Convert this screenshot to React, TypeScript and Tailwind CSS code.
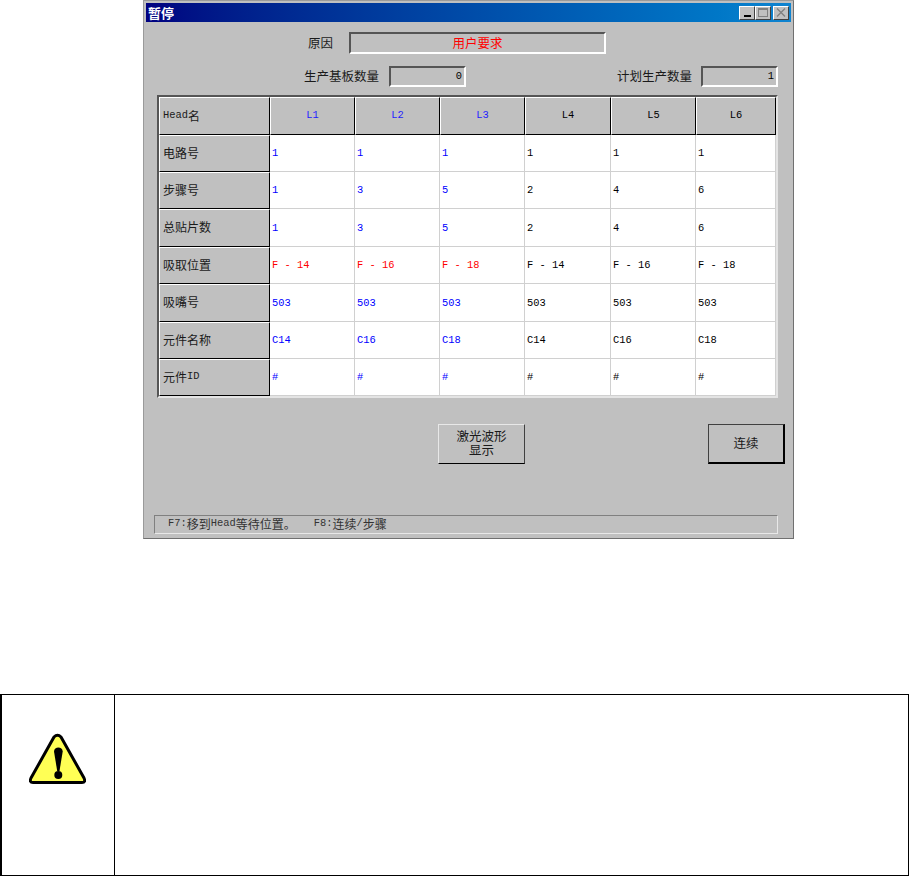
import React from 'react';

const cjk = "font-['Noto_Sans_CJK_SC','Liberation_Sans',sans-serif]";
const mono = "font-['Liberation_Mono','Noto_Sans_CJK_SC',monospace]";

const columns = [
  { name: 'L1', color: 'text-[#0000ff]', cells: ['1', '1', '1', 'F - 14', '503', 'C14', '#'] },
  { name: 'L2', color: 'text-[#0000ff]', cells: ['1', '3', '3', 'F - 16', '503', 'C16', '#'] },
  { name: 'L3', color: 'text-[#0000ff]', cells: ['1', '5', '5', 'F - 18', '503', 'C18', '#'] },
  { name: 'L4', color: 'text-black', cells: ['1', '2', '2', 'F - 14', '503', 'C14', '#'] },
  { name: 'L5', color: 'text-black', cells: ['1', '4', '4', 'F - 16', '503', 'C16', '#'] },
  { name: 'L6', color: 'text-black', cells: ['1', '6', '6', 'F - 18', '503', 'C18', '#'] },
];

const rowLabels = ['电路号', '步骤号', '总贴片数', '吸取位置', '吸嘴号', '元件名称', '元件ID'];

const Field = ({ className, text }: { className: string; text: string }) => (
  <div className={`flex items-center border-2 border-t-[#555555] border-l-[#555555] border-b-white border-r-white ${className}`}>
    {text}
  </div>
);

const TitleButton = ({ children, className = '' }: { children: React.ReactNode; className?: string }) => (
  <div className={`flex h-[14px] w-[16px] items-center justify-center border border-t-white border-l-white border-b-[#404040] border-r-[#404040] bg-[#c0c0c0] ${className}`}>
    {children}
  </div>
);

const App = () => {
  return (
    <div className="h-[876px] w-[909px] overflow-hidden bg-white">
      {/* dialog */}
      <div className="ml-[143px] h-[539px] w-[651px] border border-[#9a9a9a] border-r-[#707070] border-b-[#707070] bg-[#c0c0c0] p-[2px]">
        <div className="flex h-[19px] items-center justify-between bg-gradient-to-r from-[#000080] to-[#1084d0] pl-[2px] pr-[2px]">
          <span className={`${cjk} text-[13px] font-bold leading-none text-white`}>暂停</span>
          <div className="flex items-center">
            <TitleButton>
              <div className="mt-[7px] h-[2px] w-[7px] bg-black" />
            </TitleButton>
            <TitleButton>
              <div className="h-[9px] w-[10px] border border-t-2 border-[#808080]" />
            </TitleButton>
            <TitleButton className="ml-[2px]">
              <svg width="10" height="9" viewBox="0 0 10 9" stroke="#808080" strokeWidth="1.4">
                <path d="M1 0.5 L9 8.5 M9 0.5 L1 8.5" />
              </svg>
            </TitleButton>
          </div>
        </div>

        {/* reason */}
        <div className="mt-[10px] flex h-[22px] items-center">
          <span className={`${cjk} ml-[162px] w-[41px] text-[12.5px] text-[#1a1a1a]`}>原因</span>
          <Field className={`${cjk} h-[22px] w-[257px] justify-center text-[12.5px] text-[#ff0000]`} text="用户要求" />
        </div>

        {/* counts */}
        <div className="mt-[12px] flex h-[21px] items-center">
          <span className={`${cjk} ml-[158px] w-[85px] text-[12.5px] text-[#1a1a1a]`}>生产基板数量</span>
          <Field className={`${mono} h-[21px] w-[77px] justify-end pr-[2px] text-[10.4px] text-black`} text="0" />
          <span className={`${cjk} ml-[151px] w-[84px] text-[12.5px] text-[#1a1a1a]`}>计划生产数量</span>
          <Field className={`${mono} h-[21px] w-[77px] justify-end pr-[2px] text-[10.4px] text-black`} text="1" />
        </div>

        {/* head table */}
        <div className="ml-[11px] mt-[8px] grid h-[303px] w-[621px] grid-cols-[111px_85px_85px_85px_86px_85px_80px] grid-rows-[38px_37px_37px_38px_37px_38px_37px_37px] border-2 border-t-[#555555] border-l-[#555555] border-b-[#e4e4e4] border-r-[#e4e4e4]">
          <div className={`${mono} flex items-center border border-t-white border-l-white border-b-black border-r-black bg-[#c0c0c0] pl-[3px] text-[10.4px] text-[#1a1a1a]`}>
            Head<span className={`${cjk} text-[12px]`}>名</span>
          </div>
          {columns.map((c) => (
            <div
              key={c.name}
              className={`${mono} ${c.color === 'text-black' ? 'text-black' : 'text-[#2020ff]'} flex items-center justify-center border border-t-white border-l-white border-b-black border-r-black bg-[#c0c0c0] text-[10.4px]`}
            >
              {c.name}
            </div>
          ))}
          {rowLabels.map((label, r) => (
            <React.Fragment key={label}>
              <div className={`${cjk} flex items-center border border-t-white border-l-white border-b-black border-r-black bg-[#c0c0c0] pb-[2px] pl-[3px] text-[12px] text-[#1a1a1a]`}>
                {label === '元件ID' ? (
                  <>
                    元件<span className={`${mono} text-[10.4px]`}>ID</span>
                  </>
                ) : (
                  label
                )}
              </div>
              {columns.map((c) => (
                <div
                  key={c.name}
                  className={`${mono} ${c.cells[r].startsWith('F') && c.color !== 'text-black' ? 'text-[#ff0000]' : c.color} flex items-center whitespace-pre border-b border-r border-b-[#d0d0d0] border-r-[#d0d0d0] bg-white pl-[2px] pt-[2px] text-[10.4px]`}
                >
                  {c.cells[r]}
                </div>
              ))}
            </React.Fragment>
          ))}
        </div>

        {/* buttons */}
        <div className="mt-[26px] flex h-[40px] items-stretch">
          <button className={`${cjk} ml-[292px] w-[87px] border border-t-[#e8e8e8] border-l-[#e8e8e8] border-r-[#404040] border-b-black bg-[#c0c0c0] pb-[2px] text-[12.5px] leading-[14px] text-[#1a1a1a]`}>
            激光波形
            <br />
            显示
          </button>
          <button className={`${cjk} ml-[183px] w-[77px] border border-r-2 border-b-2 border-black border-t-[#404040] border-l-[#404040] bg-[#c0c0c0] text-[12.5px] text-[#1a1a1a]`}>
            连续
          </button>
        </div>

        {/* status bar */}
        <div className={`${mono} ml-[8px] mt-[51px] flex h-[19px] w-[624px] items-center border border-t-[#808080] border-l-[#808080] border-b-[#e8e8e8] border-r-[#e8e8e8] pb-[1px] pl-[13px] text-[10.4px] text-[#333333]`}>
          F7:<span className={`${cjk} text-[12px]`}>移到</span>Head<span className={`${cjk} text-[12px]`}>等待位置。</span>
          <span className="ml-[18px]">F8:</span><span className={`${cjk} text-[12px]`}>连续</span>/<span className={`${cjk} text-[12px]`}>步骤</span>
        </div>
      </div>

      {/* warning box */}
      <div className="mt-[155px] flex h-[182px] w-[909px] border border-black border-l-2">
        <div className="flex w-[113px] justify-start border-r border-black pl-[27px] pt-[38px]">
          <svg width="57" height="51" viewBox="0 0 57 51">
            <path
              d="M25 4 Q28.5 0.5 32 4 L55 45 Q57 49.5 53 49.5 L4 49.5 Q0 49.5 2 45 Z"
              fill="#ffff55"
              stroke="#000"
              strokeWidth="3"
              strokeLinejoin="round"
            />
            <path d="M25 18.5 C25 13 33.7 13 33.7 18.5 L30.5 38 L28.2 38 Z" fill="#000" />
            <circle cx="29.3" cy="42" r="4" fill="#000" />
          </svg>
        </div>
        <div className="flex-1" />
      </div>
    </div>
  );
};

export default App;
